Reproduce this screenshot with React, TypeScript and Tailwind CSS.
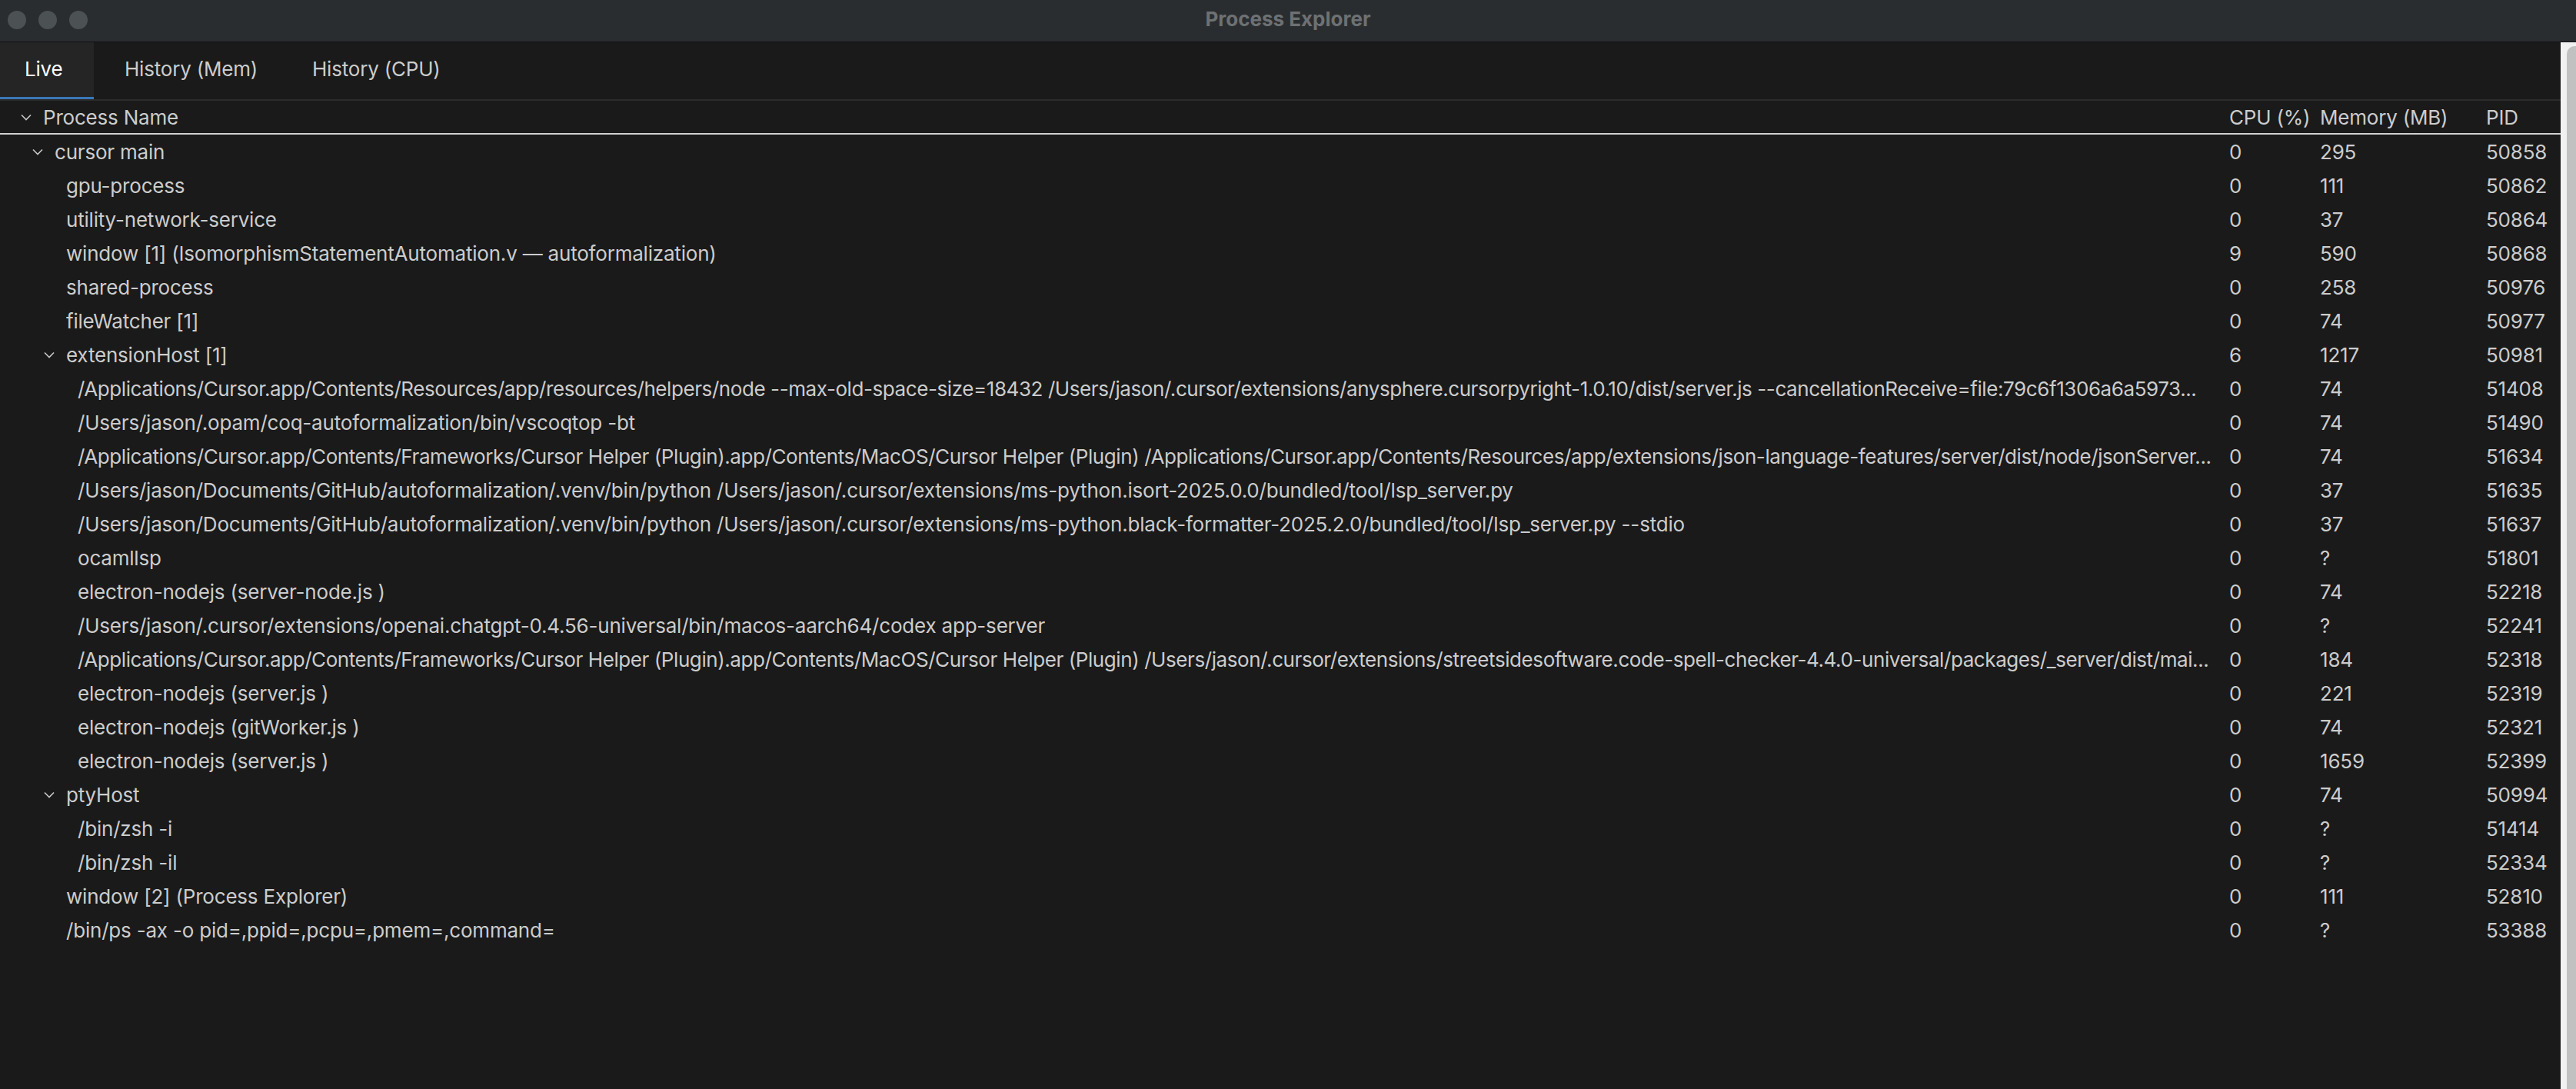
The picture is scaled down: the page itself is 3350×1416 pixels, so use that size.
import React from 'react';

type Proc = {
  level: number;
  name: string;
  cpu: string;
  mem: string;
  pid: string;
  expanded?: boolean;
  long?: boolean;
};

const procs: Proc[] = [
  { level: 0, name: 'cursor main', cpu: '0', mem: '295', pid: '50858', expanded: true },
  { level: 1, name: 'gpu-process', cpu: '0', mem: '111', pid: '50862' },
  { level: 1, name: 'utility-network-service', cpu: '0', mem: '37', pid: '50864' },
  { level: 1, name: 'window [1] (IsomorphismStatementAutomation.v — autoformalization)', cpu: '9', mem: '590', pid: '50868' },
  { level: 1, name: 'shared-process', cpu: '0', mem: '258', pid: '50976' },
  { level: 1, name: 'fileWatcher [1]', cpu: '0', mem: '74', pid: '50977' },
  { level: 1, name: 'extensionHost [1]', cpu: '6', mem: '1217', pid: '50981', expanded: true },
  {
    level: 2,
    name: '/Applications/Cursor.app/Contents/Resources/app/resources/helpers/node --max-old-space-size=18432 /Users/jason/.cursor/extensions/anysphere.cursorpyright-1.0.10/dist/server.js --cancellationReceive=file:79c6f1306a6a5973...',
    cpu: '0',
    mem: '74',
    pid: '51408',
    long: true,
  },
  { level: 2, name: '/Users/jason/.opam/coq-autoformalization/bin/vscoqtop -bt', cpu: '0', mem: '74', pid: '51490' },
  {
    level: 2,
    name: '/Applications/Cursor.app/Contents/Frameworks/Cursor Helper (Plugin).app/Contents/MacOS/Cursor Helper (Plugin) /Applications/Cursor.app/Contents/Resources/app/extensions/json-language-features/server/dist/node/jsonServer...',
    cpu: '0',
    mem: '74',
    pid: '51634',
    long: true,
  },
  {
    level: 2,
    name: '/Users/jason/Documents/GitHub/autoformalization/.venv/bin/python /Users/jason/.cursor/extensions/ms-python.isort-2025.0.0/bundled/tool/lsp_server.py',
    cpu: '0',
    mem: '37',
    pid: '51635',
  },
  {
    level: 2,
    name: '/Users/jason/Documents/GitHub/autoformalization/.venv/bin/python /Users/jason/.cursor/extensions/ms-python.black-formatter-2025.2.0/bundled/tool/lsp_server.py --stdio',
    cpu: '0',
    mem: '37',
    pid: '51637',
  },
  { level: 2, name: 'ocamllsp', cpu: '0', mem: '?', pid: '51801' },
  { level: 2, name: 'electron-nodejs (server-node.js )', cpu: '0', mem: '74', pid: '52218' },
  { level: 2, name: '/Users/jason/.cursor/extensions/openai.chatgpt-0.4.56-universal/bin/macos-aarch64/codex app-server', cpu: '0', mem: '?', pid: '52241' },
  {
    level: 2,
    name: '/Applications/Cursor.app/Contents/Frameworks/Cursor Helper (Plugin).app/Contents/MacOS/Cursor Helper (Plugin) /Users/jason/.cursor/extensions/streetsidesoftware.code-spell-checker-4.4.0-universal/packages/_server/dist/mai...',
    cpu: '0',
    mem: '184',
    pid: '52318',
    long: true,
  },
  { level: 2, name: 'electron-nodejs (server.js )', cpu: '0', mem: '221', pid: '52319' },
  { level: 2, name: 'electron-nodejs (gitWorker.js )', cpu: '0', mem: '74', pid: '52321' },
  { level: 2, name: 'electron-nodejs (server.js )', cpu: '0', mem: '1659', pid: '52399' },
  { level: 1, name: 'ptyHost', cpu: '0', mem: '74', pid: '50994', expanded: true },
  { level: 2, name: '/bin/zsh -i', cpu: '0', mem: '?', pid: '51414' },
  { level: 2, name: '/bin/zsh -il', cpu: '0', mem: '?', pid: '52334' },
  { level: 1, name: 'window [2] (Process Explorer)', cpu: '0', mem: '111', pid: '52810' },
  { level: 1, name: '/bin/ps -ax -o pid=,ppid=,pcpu=,pmem=,command=', cpu: '0', mem: '?', pid: '53388' },
];

// indent per tree level, header sits one level above the root
const indent = ['pl-[42px]', 'pl-[57px]', 'pl-[72px]'];

const Chevron = () => (
  <svg width="14" height="9" viewBox="0 0 14 9" fill="none">
    <polyline points="1,1.5 7,7.5 13,1.5" stroke="#c8c8c8" strokeWidth="1.6" />
  </svg>
);

const cols = 'grid grid-cols-[1fr_118px_216px_97px]';

export default function App() {
  return (
    <div className="h-[1416px] w-full overflow-hidden bg-[#1a1a1a] font-['Inter','Noto_Sans',sans-serif] text-[26px] tracking-[-0.2px] text-[#cccccc] flex flex-col">
      {/* title bar */}
      <div className="h-[55px] shrink-0 bg-[#2a2d2f] border-b border-[#0f0f0f] grid grid-cols-[1fr_auto_1fr] items-center">
        <div className="flex gap-[16px] pl-[10px] pb-[3px]">
          <span className="w-[24px] h-[24px] rounded-full bg-[#4c5153]" />
          <span className="w-[24px] h-[24px] rounded-full bg-[#4c5153]" />
          <span className="w-[24px] h-[24px] rounded-full bg-[#4c5153]" />
        </div>
        <div className="font-bold tracking-normal text-[#6d7174] pb-[5px]">Process Explorer</div>
        <div />
      </div>

      <div className="flex flex-1 min-h-0">
        <div className="flex-1 min-w-0 flex flex-col">
          {/* tabs */}
          <div className="h-[76px] shrink-0 flex border-b-2 border-[#2b2b2b]">
            <div className="w-[122px] pl-[32px] pb-[2px] bg-[#252526] border-b-[3px] border-[#3b78b8] flex items-center text-white">
              Live
            </div>
            <div className="w-[244px] pl-[40px] flex items-center pb-[6px]">History (Mem)</div>
            <div className="pl-[40px] flex items-center pb-[6px]">History (CPU)</div>
          </div>

          {/* header */}
          <div className={`${cols} h-[44px] shrink-0 border-b-2 border-[#d0d0d0] items-center`}>
            <div className="flex items-center pl-[27px]">
              <span className="w-[29px] flex">
                <Chevron />
              </span>
              <span>Process Name</span>
            </div>
            <div>CPU (%)</div>
            <div>Memory (MB)</div>
            <div>PID</div>
          </div>

          {/* rows */}
          <div className="flex flex-col">
            {procs.map((p, i) => (
              <div key={i} className={`${cols} h-[44px] items-center`}>
                <div className={`flex items-center min-w-0 pr-[4px] ${indent[p.level]}`}>
                  <span className="w-[29px] shrink-0 flex">{p.expanded && <Chevron />}</span>
                  <span className={`truncate whitespace-pre ${p.long ? 'tracking-[-0.42px]' : ''}`}>{p.name}</span>
                </div>
                <div>{p.cpu}</div>
                <div>{p.mem}</div>
                <div>{p.pid}</div>
              </div>
            ))}
          </div>
        </div>

        {/* page scrollbar */}
        <div className="w-[20px] shrink-0 bg-[#f1f1f1] pl-[8px] pt-[5px] flex">
          <div className="flex-1 bg-[#c1c1c1] rounded-tl-[10px]" />
        </div>
      </div>
    </div>
  );
}
